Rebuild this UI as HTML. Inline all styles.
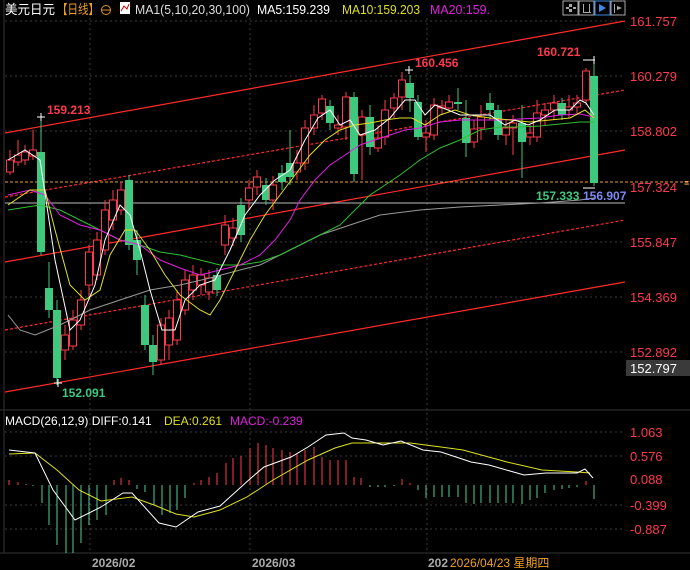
<!DOCTYPE html>
<html><head><meta charset="utf-8"><style>
html,body{margin:0;padding:0;background:#000;width:690px;height:570px;overflow:hidden}
svg{display:block}
text{font-family:"Liberation Sans","Noto Sans CJK SC",sans-serif}
</style></head><body>
<svg id="s" width="690" height="570" xmlns="http://www.w3.org/2000/svg">
<rect width="690" height="570" fill="#000"/>
<g stroke="#3a3a3a" stroke-dasharray="2,3" stroke-width="1">
<line x1="5" y1="21" x2="625" y2="21"/><line x1="5" y1="76" x2="625" y2="76"/><line x1="5" y1="131" x2="625" y2="131"/>
<line x1="5" y1="242" x2="625" y2="242"/><line x1="5" y1="297" x2="625" y2="297"/><line x1="5" y1="352" x2="625" y2="352"/>
<line x1="90" y1="18" x2="90" y2="553"/><line x1="250" y1="18" x2="250" y2="553"/><line x1="427" y1="18" x2="427" y2="553"/>
<line x1="5" y1="432" x2="625" y2="432"/><line x1="5" y1="456" x2="625" y2="456"/><line x1="5" y1="505" x2="625" y2="505"/><line x1="5" y1="529" x2="625" y2="529"/>
</g>
<line x1="4" y1="0" x2="4" y2="553" stroke="#333"/>
<line x1="0" y1="410" x2="690" y2="410" stroke="#333"/>
<line x1="0" y1="553" x2="690" y2="553" stroke="#333"/>
<g stroke="#ff2a2a" stroke-width="1.2" fill="none">
<line x1="5" y1="133" x2="625" y2="21"/>
<line x1="5" y1="262" x2="625" y2="150"/>
<line x1="5" y1="392" x2="625" y2="282"/>
<line x1="5" y1="197" x2="625" y2="90" stroke-dasharray="3,2"/>
<line x1="5" y1="330" x2="625" y2="220" stroke-dasharray="3,2"/>
</g>
<line x1="5" y1="182" x2="690" y2="182" stroke="#f0a040" stroke-dasharray="3,2"/>
<line x1="5" y1="203" x2="625" y2="203" stroke="#bbb"/>
<g id="c"></g>
<g id="m" fill="none" stroke-width="1"></g>
<!-- header -->
<text x="5" y="14" font-size="13" fill="#fff" textLength="50" lengthAdjust="spacingAndGlyphs">美元日元</text>
<text x="57" y="14" font-size="13" fill="#f0a020" textLength="42" lengthAdjust="spacingAndGlyphs">【日线】</text>
<circle cx="106" cy="10" r="4.5" fill="none" stroke="#e09030"/><line x1="101" y1="10" x2="111" y2="10" stroke="#e09030"/>
<rect x="120" y="2" width="10" height="12" fill="#fff"/><polyline points="121,11 124,6 127,9 129,4" stroke="#c00" fill="none"/>
<text x="135" y="14" font-size="13" fill="#ddd" textLength="115" lengthAdjust="spacingAndGlyphs">MA1(5,10,20,30,100)</text>
<text x="257" y="14" font-size="13" fill="#fff" textLength="73" lengthAdjust="spacingAndGlyphs">MA5:159.239</text>
<text x="342" y="14" font-size="13" fill="#e0e020" textLength="78" lengthAdjust="spacingAndGlyphs">MA10:159.203</text>
<text x="430" y="14" font-size="13" fill="#e020e0" textLength="60" lengthAdjust="spacingAndGlyphs">MA20:159.</text>
<g fill="none" stroke="#aaa"><rect x="563" y="1" width="15" height="14"/><rect x="579" y="1" width="15" height="14"/><rect x="595" y="1" width="15" height="14" stroke="#3a8ee0"/><rect x="611" y="1" width="14" height="14"/></g>
<g fill="#aaa"><rect x="569" y="4" width="3" height="3"/><rect x="569" y="9" width="3" height="3"/><rect x="566" y="7" width="3" height="2"/><rect x="573" y="7" width="3" height="2"/>
<rect x="583" y="4" width="1" height="9"/><rect x="589" y="4" width="1" height="9"/><rect x="583" y="12" width="8" height="1"/>
<polygon points="599,4 606,8 599,12" fill="#3a8ee0"/><rect x="614" y="4" width="1" height="9"/><polygon points="617,6 622,8 617,10"/></g>
<!-- right axis -->
<g font-size="13" fill="#ff3a4a">
<text x="630" y="26">161.757</text><text x="630" y="81">160.279</text><text x="630" y="136">158.802</text><text x="630" y="192">157.324</text>
<text x="630" y="247">155.847</text><text x="630" y="302">154.369</text><text x="630" y="357">152.892</text>
<text x="630" y="437">1.063</text><text x="630" y="461">0.576</text><text x="630" y="484">0.088</text><text x="630" y="510">-0.399</text><text x="630" y="534">-0.887</text>
</g>
<rect x="626" y="360" width="64" height="16" fill="#3a3a3a"/><text x="630" y="373" font-size="13" fill="#fff">152.797</text>
<text x="684" y="186" font-size="9" fill="#f0a040">≡</text>
<!-- annotations -->
<g font-size="12" font-weight="bold">
<text x="47" y="114" fill="#ff3a4a">159.213</text>
<text x="415" y="67" fill="#ff3a4a">160.456</text>
<text x="537" y="56" fill="#ff3a4a">160.721</text>
<text x="62" y="397" fill="#3ec97e">152.091</text>
<text x="536" y="200" fill="#3ec97e">157.333</text>
<text x="583" y="200" fill="#7a8af0">156.907</text>
</g>
<g stroke="#fff"><line x1="37" y1="117" x2="45" y2="117"/><line x1="41" y1="113" x2="41" y2="121"/>
<line x1="405" y1="70" x2="413" y2="70"/><line x1="409" y1="66" x2="409" y2="74"/>
<line x1="583" y1="60" x2="595" y2="60"/><line x1="594" y1="56" x2="594" y2="64"/>
<line x1="54" y1="383" x2="62" y2="383"/><line x1="58" y1="379" x2="58" y2="387"/>
<line x1="583" y1="188" x2="595" y2="188"/></g>
<text x="5" y="425" font-size="12" fill="#fff">MACD(26,12,9) DIFF:0.141</text>
<text x="164" y="425" font-size="12" fill="#e0e020">DEA:0.261</text>
<text x="230" y="425" font-size="12" fill="#e020e0">MACD:-0.239</text>
<text x="92" y="567" font-size="12" font-weight="bold" fill="#aaa">2026/02</text>
<text x="252" y="567" font-size="12" font-weight="bold" fill="#aaa">2026/03</text>
<text x="428" y="567" font-size="12" font-weight="bold" fill="#aaa">202</text>
<text x="450" y="567" font-size="12" fill="#f0a020">2026/04/23 星期四</text>
</svg>
<script>
var NS="http://www.w3.org/2000/svg";
function el(p,t,a){var e=document.createElementNS(NS,t);for(var k in a)e.setAttribute(k,a[k]);p.appendChild(e);return e;}
var R="#ff3a4a",G="#3ec97e";
var C=[[10,'r',160,172,150,175],[18,'r',155,162,140,166],[25,'r',152,160,145,165],[33,'r',150,156,130,160],[41,'g',152,252,120,255],
[49,'g',288,310,262,318],[57,'g',310,378,300,385],[65,'r',335,350,325,360],[73,'r',320,346,310,350],[81,'r',300,325,290,330],
[89,'r',252,285,245,300],[97,'r',240,275,232,280],[105,'r',210,250,200,255],[113,'r',200,220,190,230],[121,'r',190,210,182,215],
[129,'g',180,245,175,250],[137,'g',240,260,230,275],[145,'g',305,345,295,350],[153,'g',345,362,335,375],[161,'r',325,360,318,365],
[169,'r',318,345,310,360],[177,'r',300,340,290,345],[185,'r',280,310,270,315],[193,'r',275,290,265,300],[201,'r',275,285,268,295],
[209,'r',278,292,270,300],[217,'g',275,290,268,296],[225,'r',225,245,215,255],[233,'r',228,238,218,246],[241,'g',205,235,198,242],
[249,'r',188,200,180,210],[257,'r',177,187,170,195],[266,'g',185,200,178,205],[273,'r',185,200,176,210],[282,'g',173,182,165,190],
[290,'g',163,177,130,185],[297,'r',163,172,150,180],[305,'r',128,163,120,170],[314,'r',115,128,105,135],[322,'r',99,113,95,120],
[330,'g',106,123,100,130],[338,'r',125,128,115,135],[346,'r',97,127,92,140],[354,'g',97,174,92,182],[362,'r',117,135,110,180],
[370,'g',117,147,105,155],[378,'r',138,148,125,152],[385,'r',110,137,100,145],[394,'r',98,108,93,118],[402,'r',80,97,72,110],
[410,'g',83,98,75,112],[418,'g',102,137,95,140],[426,'r',133,137,120,152],[434,'r',105,135,98,140],[442,'r',106,108,100,115],
[449,'r',102,108,95,112],[458,'g',102,104,88,110],[466,'g',118,143,100,157],[474,'r',129,142,120,148],[481,'r',117,128,105,140],
[490,'g',103,110,93,120],[498,'g',110,135,105,140],[506,'r',128,135,120,145],[513,'r',123,128,115,155],[522,'g',123,142,105,178],
[530,'r',133,137,125,145],[537,'r',113,137,100,142],[545,'r',110,115,103,125],[554,'r',103,110,95,120],[562,'g',103,115,98,120],
[569,'r',107,110,95,118],[577,'r',103,107,95,115],[586,'r',71,100,68,105],[594,'g',76,183,60,186]];
var g=document.getElementById('c');
C.forEach(function(c){var col=c[1]=='r'?R:G;
el(g,'line',{x1:c[0],x2:c[0],y1:c[4],y2:c[5],stroke:col});
if(c[1]=='r')el(g,'rect',{x:c[0]-3.5,y:c[2],width:7,height:Math.max(1,c[3]-c[2]),fill:'#000',stroke:col});
else el(g,'rect',{x:c[0]-4,y:c[2],width:8,height:Math.max(1,c[3]-c[2]),fill:col});});
var m=document.getElementById('m');
function pl(pts,col){el(m,'polyline',{points:pts,stroke:col});}
pl("8,315 20,330 35,335 60,325 90,310 120,300 150,290 180,285 210,278 240,270 260,265 290,250 320,235 350,225 380,215 420,210 460,207 500,205 540,203 580,200 594,198","#999");
pl("8,210 40,205 60,210 80,220 100,230 120,240 140,245 160,252 180,255 200,260 220,265 240,265 260,262 280,255 300,245 320,235 340,225 355,210 370,195 385,185 400,175 420,160 440,148 460,140 480,130 500,127 520,127 540,126 560,124 580,122 594,122","#30c030");
pl("8,195 30,190 45,195 60,215 80,225 100,230 120,240 140,245 160,260 180,268 200,275 220,270 240,265 260,255 275,240 290,220 300,200 315,180 330,165 345,155 360,145 375,140 390,135 405,130 420,128 440,122 460,120 480,120 500,120 520,119 540,118 560,115 580,114 594,117","#e020e0");
pl("8,205 30,190 45,190 55,230 70,285 85,300 100,290 110,255 125,230 135,230 150,250 165,275 180,295 200,310 210,315 220,300 235,270 250,240 265,215 280,195 295,175 310,155 325,140 340,130 355,125 370,123 385,120 400,118 412,118 425,125 440,115 455,110 470,115 490,118 510,120 530,122 550,120 570,118 585,110 594,118","#e0e020");
pl("8,160 25,150 40,160 55,260 70,330 80,320 95,285 105,240 120,205 130,215 140,250 150,290 162,330 175,330 185,300 200,285 215,280 230,250 245,215 260,195 275,180 290,170 305,140 318,118 330,110 340,125 350,120 360,135 375,130 390,118 405,100 415,100 425,115 435,105 448,110 460,115 475,115 490,115 505,125 515,120 528,125 540,120 555,110 570,110 580,100 586,103 594,115","#fff");
var B=[[9,480],[18,482],[26,484],[33,486],[42,503],[49,525],[57,545],[66,553],[73,553],[81,543],[89,525],[97,520],[106,515],[114,480],[121,478],[129,480],[137,489],[145,492],[154,505],[162,515],[170,513],[177,510],[185,498],[194,483],[201,480],[209,477],[217,473],[226,463],[233,458],[241,456],[250,448],[258,443],[266,445],[273,448],[282,450],[290,452],[297,453],[305,450],[314,447],[322,457],[330,460],[338,460],[346,460],[354,477],[361,478],[370,487],[378,487],[385,487],[394,486],[402,479],[410,483],[418,490],[426,498],[434,497],[442,497],[449,497],[458,497],[466,503],[474,504],[481,503],[490,503],[498,503],[506,503],[513,503],[522,504],[530,500],[537,498],[545,493],[554,490],[562,489],[569,488],[577,487],[586,481],[594,499]];
B.forEach(function(b){el(m,'line',{x1:b[0],x2:b[0],y1:485,y2:b[1],stroke:b[1]<485?R:'#50d090'});});
pl("9,454 35,453 57,470 79,490 101,501 132,497 154,505 176,514 194,517 220,510 247,497 273,480 308,460 335,448 352,443 396,443 410,443 441,447 463,450 507,462 542,470 577,472 590,473","#e0e020");
pl("9,450 35,453 53,490 75,520 101,507 123,493 132,493 159,523 176,527 198,512 220,506 251,478 264,467 291,457 308,447 326,435 344,433 352,438 366,440 383,445 401,441 423,450 441,452 471,462 489,465 524,475 546,473 577,473 585,469 593,478","#fff");
</script>
</body></html>
